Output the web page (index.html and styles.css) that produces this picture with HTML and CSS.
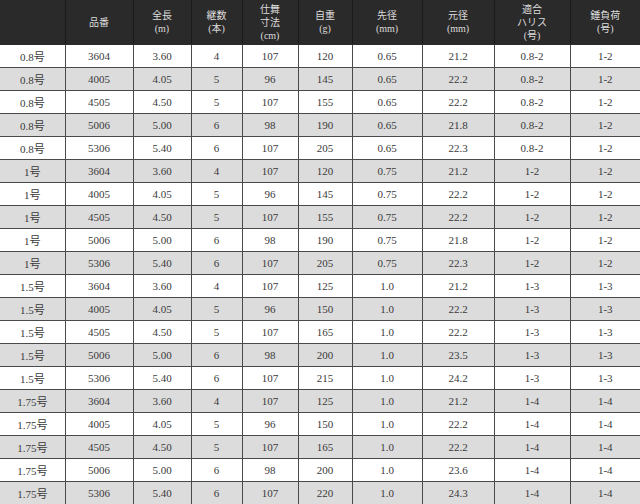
FILE: index.html
```html
<!DOCTYPE html>
<html lang="ja">
<head>
<meta charset="utf-8">
<link rel="stylesheet" href="styles.css">
</head>
<body>
<table class="spec">
<colgroup>
<col class="c0"><col class="c1"><col class="c2"><col class="c3"><col class="c4"><col class="c5"><col class="c6"><col class="c7"><col class="c8"><col class="c9">
</colgroup>
<thead>
<tr>
<th></th>
<th>品番</th>
<th>全長<br>(m)</th>
<th>継数<br>(本)</th>
<th>仕舞<br>寸法<br>(cm)</th>
<th>自重<br>(g)</th>
<th>先径<br>(mm)</th>
<th>元径<br>(mm)</th>
<th>適合<br>ハリス<br>(号)</th>
<th>錘負荷<br>(号)</th>
</tr>
</thead>
<tbody>
<tr><td>0.8号</td><td>3604</td><td>3.60</td><td>4</td><td>107</td><td>120</td><td>0.65</td><td>21.2</td><td>0.8-2</td><td>1-2</td></tr>
<tr><td>0.8号</td><td>4005</td><td>4.05</td><td>5</td><td>96</td><td>145</td><td>0.65</td><td>22.2</td><td>0.8-2</td><td>1-2</td></tr>
<tr><td>0.8号</td><td>4505</td><td>4.50</td><td>5</td><td>107</td><td>155</td><td>0.65</td><td>22.2</td><td>0.8-2</td><td>1-2</td></tr>
<tr><td>0.8号</td><td>5006</td><td>5.00</td><td>6</td><td>98</td><td>190</td><td>0.65</td><td>21.8</td><td>0.8-2</td><td>1-2</td></tr>
<tr><td>0.8号</td><td>5306</td><td>5.40</td><td>6</td><td>107</td><td>205</td><td>0.65</td><td>22.3</td><td>0.8-2</td><td>1-2</td></tr>
<tr><td>1号</td><td>3604</td><td>3.60</td><td>4</td><td>107</td><td>120</td><td>0.75</td><td>21.2</td><td>1-2</td><td>1-2</td></tr>
<tr><td>1号</td><td>4005</td><td>4.05</td><td>5</td><td>96</td><td>145</td><td>0.75</td><td>22.2</td><td>1-2</td><td>1-2</td></tr>
<tr><td>1号</td><td>4505</td><td>4.50</td><td>5</td><td>107</td><td>155</td><td>0.75</td><td>22.2</td><td>1-2</td><td>1-2</td></tr>
<tr><td>1号</td><td>5006</td><td>5.00</td><td>6</td><td>98</td><td>190</td><td>0.75</td><td>21.8</td><td>1-2</td><td>1-2</td></tr>
<tr><td>1号</td><td>5306</td><td>5.40</td><td>6</td><td>107</td><td>205</td><td>0.75</td><td>22.3</td><td>1-2</td><td>1-2</td></tr>
<tr><td>1.5号</td><td>3604</td><td>3.60</td><td>4</td><td>107</td><td>125</td><td>1.0</td><td>21.2</td><td>1-3</td><td>1-3</td></tr>
<tr><td>1.5号</td><td>4005</td><td>4.05</td><td>5</td><td>96</td><td>150</td><td>1.0</td><td>22.2</td><td>1-3</td><td>1-3</td></tr>
<tr><td>1.5号</td><td>4505</td><td>4.50</td><td>5</td><td>107</td><td>165</td><td>1.0</td><td>22.2</td><td>1-3</td><td>1-3</td></tr>
<tr><td>1.5号</td><td>5006</td><td>5.00</td><td>6</td><td>98</td><td>200</td><td>1.0</td><td>23.5</td><td>1-3</td><td>1-3</td></tr>
<tr><td>1.5号</td><td>5306</td><td>5.40</td><td>6</td><td>107</td><td>215</td><td>1.0</td><td>24.2</td><td>1-3</td><td>1-3</td></tr>
<tr><td>1.75号</td><td>3604</td><td>3.60</td><td>4</td><td>107</td><td>125</td><td>1.0</td><td>21.2</td><td>1-4</td><td>1-4</td></tr>
<tr><td>1.75号</td><td>4005</td><td>4.05</td><td>5</td><td>96</td><td>150</td><td>1.0</td><td>22.2</td><td>1-4</td><td>1-4</td></tr>
<tr><td>1.75号</td><td>4505</td><td>4.50</td><td>5</td><td>107</td><td>165</td><td>1.0</td><td>22.2</td><td>1-4</td><td>1-4</td></tr>
<tr><td>1.75号</td><td>5006</td><td>5.00</td><td>6</td><td>98</td><td>200</td><td>1.0</td><td>23.6</td><td>1-4</td><td>1-4</td></tr>
<tr><td>1.75号</td><td>5306</td><td>5.40</td><td>6</td><td>107</td><td>220</td><td>1.0</td><td>24.3</td><td>1-4</td><td>1-4</td></tr>
</tbody>
</table>
</body>
</html>
```

FILE: styles.css
```css
html, body {
  margin: 0;
  padding: 0;
  background: #ffffff;
}

.spec {
  width: 640px;
  table-layout: fixed;
  border-collapse: collapse;
  font-family: "Liberation Serif", "Noto Sans CJK JP", serif;
  font-size: 11px;
  color: #3a3a3a;
}

.c0 { width: 65px; }
.c1 { width: 68px; }
.c2 { width: 58px; }
.c3 { width: 51px; }
.c4 { width: 56px; }
.c5 { width: 54px; }
.c6 { width: 70px; }
.c7 { width: 72px; }
.c8 { width: 76px; }
.c9 { width: 70px; }

.spec th {
  height: 44px;
  padding: 0;
  background: #2b2a2a;
  color: #dcdcdc;
  font-weight: normal;
  font-size: 10px;
  line-height: 13px;
  text-align: center;
  vertical-align: middle;
  border-left: 1px solid #1a1a1a;
  border-right: 1px solid #1a1a1a;
  border-bottom: 1px solid #2b2a2a;
}

.spec th:first-child { border-left: none; }
.spec th:last-child { border-right: none; }

.spec td {
  height: 22px;
  padding: 0;
  text-align: center;
  vertical-align: middle;
  border: 1px solid #4a4a4a;
  border-top: none;
  line-height: normal;
}

.spec td:first-child { border-left: none; }
.spec td:last-child { border-right: none; }

.spec tbody tr:nth-child(even) td {
  background: #dcdcdc;
}
```
